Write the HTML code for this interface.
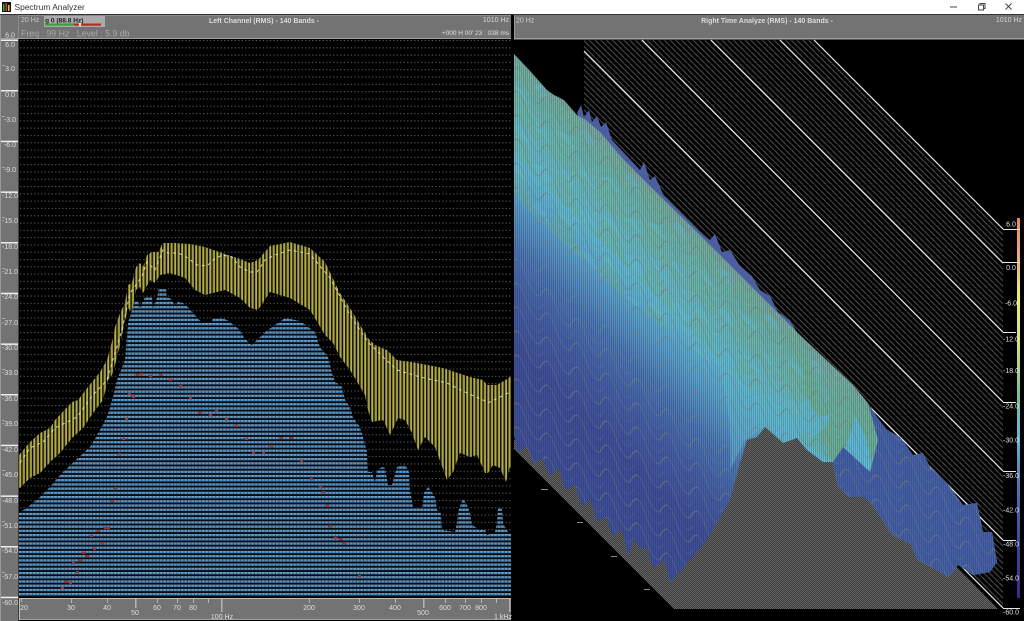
<!DOCTYPE html>
<html><head><meta charset="utf-8"><title>Spectrum Analyzer</title>
<style>
html,body{margin:0;padding:0;background:#000;width:1024px;height:621px;overflow:hidden}
svg{display:block}
text{font-family:"Liberation Sans",sans-serif}
</style></head><body>
<svg xmlns="http://www.w3.org/2000/svg" width="1024" height="621" viewBox="0 0 1024 621">
<defs>
<pattern id="dots" patternUnits="userSpaceOnUse" width="3.52" height="7.3" patternTransform="translate(19 40)"><rect width="3.52" height="7.3" fill="#000"/><rect x="1" y="0" width="1.2" height="1.1" fill="#5c5c5c"/></pattern>
<pattern id="yel" patternUnits="userSpaceOnUse" width="3.52" height="4" patternTransform="translate(19 0)"><rect width="3.52" height="4" fill="#000"/><rect x="0" width=".9" height="4" fill="#85822f"/><rect x=".9" width="1.4" height="4" fill="#bab24a"/></pattern>
<pattern id="blu" patternUnits="userSpaceOnUse" width="3.52" height="4.22" patternTransform="translate(19 597.3)"><rect width="3.52" height="4.22" fill="#03060a"/><rect y="0" width="3.52" height=".8" fill="#8fb8d8"/><rect y=".8" width="3.52" height="1.5" fill="#4f96d0"/><rect x="2.6" width=".9" height="4.22" fill="#123" opacity=".55"/></pattern>
<pattern id="hatch" patternUnits="userSpaceOnUse" width="5.77" height="5.77" patternTransform="translate(1 0)"><path d="M-1 -1L6.77 6.77" stroke="#525252" stroke-width="1" fill="none"/></pattern>
<pattern id="chk" patternUnits="userSpaceOnUse" width="2" height="2"><rect width="2" height="2" fill="#3b3b3b"/><rect width="1" height="1" fill="#6a6a6a"/><rect x="1" y="1" width="1" height="1" fill="#626262"/></pattern>
<pattern id="vs" patternUnits="userSpaceOnUse" width="2" height="4"><rect x="1" width="1" height="4" fill="#0b1530" opacity=".2"/></pattern>
<pattern id="wav" patternUnits="userSpaceOnUse" width="30" height="24" patternTransform="skewY(45)"><path d="M0 20Q7.5 -4 15 12T30 20" fill="none" stroke="#80887f" stroke-width=".9" opacity=".62"/><path d="M0 8Q7.5 -12 15 2T30 8" fill="none" stroke="#80887f" stroke-width=".6" opacity=".4"/></pattern>
<pattern id="wav2" patternUnits="userSpaceOnUse" width="11" height="9" patternTransform="skewY(45)"><path d="M0 8Q3 -1 6 5T11 8" fill="none" stroke="#a0ccd0" stroke-width=".5" opacity=".35"/></pattern>
<pattern id="blob" patternUnits="userSpaceOnUse" width="46" height="40" patternTransform="skewY(45)"><path d="M0 30Q11 -6 23 22T46 30V40H0Z" fill="#6fb596" opacity=".38"/><path d="M4 16Q14 0 24 16Z" fill="#66c6dc" opacity=".45"/><path d="M26 34Q36 16 44 34Z" fill="#66c6dc" opacity=".4"/></pattern>
<linearGradient id="surf" gradientUnits="userSpaceOnUse" x1="700" y1="235" x2="550" y2="385">
<stop offset="0" stop-color="#78a89e"/><stop offset=".1" stop-color="#6ab4a8"/><stop offset=".22" stop-color="#68b8bc"/><stop offset=".36" stop-color="#62bcd2"/><stop offset=".5" stop-color="#5a9fcb"/><stop offset=".65" stop-color="#4c78b4"/><stop offset=".8" stop-color="#4660a6"/><stop offset="1" stop-color="#3f4f98"/>
</linearGradient>
<linearGradient id="scale" x1="0" y1="0" x2="0" y2="1">
<stop offset="0" stop-color="#e8875a"/><stop offset=".12" stop-color="#eeb08a"/><stop offset=".2" stop-color="#f2f060"/><stop offset=".33" stop-color="#d8e070"/><stop offset=".47" stop-color="#70c0a0"/><stop offset=".58" stop-color="#60bcd8"/><stop offset=".7" stop-color="#4c78b8"/><stop offset=".85" stop-color="#3c48a0"/><stop offset="1" stop-color="#3a2a88"/>
</linearGradient>
<clipPath id="hclip"><polygon points="584,40 814,40 1003,229 1003,608 584,189"/></clipPath>
<clipPath id="sclip"><polygon points="514,54 531,72 547,90 554,95 564,100 577,115 586,120 601,133 624,160 632,168 660,196 700,235 730,265 760,295 800,335 853,385 868,403 877,417 887,430 900,437 913,455 923,453 930,467 947,483 963,505 977,503 983,532 992,532 997,562 990,572 973,575 958,565 948,577 937,570 918,560 910,543 892,535 875,508 865,497 850,497 838,487 833,462 823,462 807,450 797,438 783,443 765,427 757,437 747,440 740,463 730,500 707,540 670,583 665,560 653,568 647,548 640,548 634,540 628,556 622,530 612,536 606,516 598,522 590,500 582,506 574,484 566,490 558,468 550,476 542,458 534,464 526,446 518,452 514,436"/></clipPath>
<clipPath id="rclip"><polygon points="514,54 868,403 840,440 760,400 640,310 514,200"/></clipPath>
</defs>

<!-- title bar -->
<rect width="1024" height="14" fill="#fff"/>
<rect y="14" width="1024" height="1" fill="#333"/>
<rect x="2" y="2" width="9" height="10" fill="#111"/>
<rect x="3" y="4" width="1.5" height="7" fill="#3a3"/><rect x="5.5" y="3" width="1.5" height="8" fill="#c33"/><rect x="8" y="5" width="1.5" height="6" fill="#dc3"/>
<text x="14.5" y="10" font-size="8.4" fill="#333">Spectrum Analyzer</text>
<rect x="950" y="6.5" width="7" height="1" fill="#444"/>
<path d="M978.5 5h5v5h-5zM980 5V3.500h5v5h-1.500" fill="none" stroke="#444" stroke-width="1"/>
<path d="M1005.500 3.500l6 6M1011.500 3.500l-6 6" stroke="#444" stroke-width="1" fill="none"/>

<!-- left header -->
<rect y="15" width="511" height="24" fill="#737373"/>
<rect x="19" y="15" width="492" height="1" fill="#8c8c8c"/>
<rect x="18" y="15" width="1" height="24" fill="#8a8a8a"/>
<text x="21" y="22" font-size="7" fill="#c8c8c8">20 Hz</text>
<rect x="44" y="16" width="61" height="11" fill="#ababab"/>
<text x="45" y="22.500" font-size="6.600" font-weight="bold" fill="#222">g  0 (88.8 Hz)</text>
<rect x="45" y="23.500" width="29" height="2.200" fill="#3aa03a"/>
<rect x="74" y="23.500" width="27" height="2.200" fill="#b03020"/>
<rect x="79" y="23" width="2" height="3" fill="#eee"/>
<text x="21" y="36.500" font-size="8.800" fill="#a8a8a8" xml:space="preserve">Freq : 99 Hz   Level : 5.9 db</text>
<text x="264" y="23" font-size="7" font-weight="bold" text-anchor="middle" fill="#dcdcdc">Left Channel (RMS) - 140 Bands -</text>
<text x="509" y="22" font-size="7" text-anchor="end" fill="#d8d8d8">1010 Hz</text>
<text x="509" y="35" font-size="6.500" text-anchor="end" fill="#e0e0e0">+000 H 00' 23 : 038 ms</text>
<rect y="38" width="511" height="1" fill="#a0a0a0"/>

<!-- left scale -->
<rect y="39" width="19" height="582" fill="#737373"/>
<rect x="18" y="39" width="1" height="582" fill="#3c3c3c"/>
<rect x="0" y="15" width="1" height="606" fill="#999"/>
<g fill="#f0f0f0">
<rect x="1" y="39.500" width="17" height="1.500"/><rect x="1" y="90" width="17" height="1.500"/><rect x="1" y="140.700" width="17" height="1.500"/><rect x="1" y="191.400" width="17" height="1.500"/><rect x="1" y="242" width="17" height="1.500"/><rect x="1" y="292.700" width="17" height="1.500"/><rect x="1" y="343.400" width="17" height="1.500"/><rect x="1" y="394" width="17" height="1.500"/><rect x="1" y="444.700" width="17" height="1.500"/><rect x="1" y="495.400" width="17" height="1.500"/><rect x="1" y="546" width="17" height="1.500"/><rect x="1" y="596.700" width="17" height="1.500"/>
</g>
<g fill="#aaa">
<rect x="2" y="65" width="3" height="1"/><rect x="2" y="116" width="3" height="1"/><rect x="2" y="167" width="3" height="1"/><rect x="2" y="217" width="3" height="1"/><rect x="2" y="268" width="3" height="1"/><rect x="2" y="318" width="3" height="1"/><rect x="2" y="369" width="3" height="1"/><rect x="2" y="420" width="3" height="1"/><rect x="2" y="470" width="3" height="1"/><rect x="2" y="521" width="3" height="1"/><rect x="2" y="572" width="3" height="1"/>
</g>
<g font-size="7" fill="#dedede" text-anchor="middle">
<text x="10" y="37.500">6.0</text>
<text x="10" y="47">6.0</text><text x="10" y="71">3.0</text><text x="10" y="97">0.0</text><text x="10" y="122">-3.0</text><text x="10" y="147">-6.0</text><text x="10" y="172">-9.0</text><text x="10" y="198">-12.0</text><text x="10" y="223">-15.0</text><text x="10" y="249">-18.0</text><text x="10" y="274">-21.0</text><text x="10" y="299">-24.0</text><text x="10" y="325">-27.0</text><text x="10" y="350">-30.0</text><text x="10" y="375">-33.0</text><text x="10" y="401">-36.0</text><text x="10" y="426">-39.0</text><text x="10" y="452">-42.0</text><text x="10" y="477">-45.0</text><text x="10" y="503">-48.0</text><text x="10" y="528">-51.0</text><text x="10" y="553">-54.0</text><text x="10" y="579">-57.0</text><text x="10" y="605">-60.0</text>
</g>

<!-- left plot -->
<rect x="19" y="39" width="493" height="559" fill="url(#dots)"/>
<polygon fill="url(#blu)" points="19,513 28,507 40,497 50,487 60,475 78,458 90,447 100,430 107,417 113,397 117,380 121,370 125,360 128,323 135,300 138,300 140,308 145,297 152,297 153,308 157,298 159,288 166,288 167,298 170,298 175,305 178,302 183,303 188,307 195,315 202,323 212,322 213,317 218,317 227,320 240,330 244,338 252,345 265,332 285,318 300,321 315,332 320,347 328,357 332,373 335,382 342,387 345,400 350,407 353,418 360,427 363,437 367,452 368,472 372,472 375,482 377,470 382,467 385,468 388,485 392,485 397,467 405,464 409,472 410,490 413,507 422,508 424,493 428,487 435,497 437,510 441,513 442,530 455,532 457,523 458,512 463,498 467,505 470,513 472,525 480,530 485,530 487,535 495,532 497,522 498,508 502,508 503,523 508,532 512,533 512,597 19,597"/>
<polygon fill="url(#yel)" points="19,455 30,442 40,433 50,428 55,420 72,402 78,400 88,387 100,372 107,360 113,338 115,327 120,313 125,303 128,285 132,283 136,267 140,263 143,267 147,255 152,252 158,252 163,243 175,243 190,244 205,247 225,254 240,259 250,263 258,260 270,246 290,242 310,248 325,262 340,293 350,308 368,338 375,345 387,350 397,360 417,363 443,368 470,377 483,380 487,385 497,385 502,382 510,377 512,376 512,470 510,467 506,482 500,468 493,465 488,473 485,473 477,455 470,457 460,453 453,472 447,480 439,458 435,447 425,437 418,450 412,433 405,420 398,418 390,435 387,428 383,420 372,422 368,410 365,395 350,370 340,357 333,343 325,335 310,310 290,298 270,292 258,310 250,308 240,298 225,290 205,295 195,290 185,278 170,273 160,275 155,283 150,280 143,293 140,287 136,290 132,312 128,308 124,325 120,345 115,365 112,375 108,380 103,400 93,413 83,428 72,438 60,453 50,462 40,473 30,478 20,488 19,488"/>
<path d="M20 463L30 448 43 442 55 428 77 417 93 395 107 380 112 363 122 330 130 293 136 285 142 276 147 262 155 270 163 250 168 253 178 253 185 256 197 265 207 266 213 260 222 255 232 257 240 267 250 272 257 272 265 260 275 255 290 250 310 254 330 278 350 315 368 342 383 357 397 370 420 377 447 383 467 393 483 400 488 403 500 397 510 392" fill="none" stroke="#e6e6d8" stroke-width="1" stroke-dasharray="3 3.500" opacity=".85"/>
<g fill="#c83a34" stroke="#5a1a18" stroke-width=".4">
<rect x="61" y="587" width="3" height="2"/><rect x="65" y="581" width="3" height="2"/><rect x="69" y="582" width="3" height="2"/><rect x="76" y="571" width="3" height="2"/><rect x="72" y="562" width="3" height="2"/><rect x="79" y="559" width="3" height="2"/><rect x="82" y="552" width="3" height="2"/><rect x="86" y="555" width="3" height="2"/><rect x="93" y="548" width="3" height="2"/><rect x="101" y="542" width="3" height="2"/><rect x="90" y="535" width="3" height="2"/><rect x="97" y="530" width="3" height="2"/><rect x="104" y="527" width="3" height="2"/><rect x="107" y="527" width="3" height="2"/><rect x="111" y="500" width="3" height="2"/><rect x="114" y="487" width="3" height="2"/><rect x="118" y="453" width="3" height="2"/><rect x="122" y="438" width="3" height="2"/><rect x="125" y="418" width="3" height="2"/><rect x="128" y="393" width="3" height="2"/><rect x="132" y="396" width="3" height="2"/><rect x="136" y="374" width="3" height="2"/><rect x="140" y="373" width="3" height="2"/><rect x="149" y="375" width="3" height="2"/><rect x="159" y="374" width="3" height="2"/><rect x="169" y="379" width="3" height="2"/><rect x="179" y="385" width="3" height="2"/><rect x="189" y="397" width="3" height="2"/><rect x="199" y="412" width="3" height="2"/><rect x="209" y="414" width="3" height="2"/><rect x="215" y="410" width="3" height="2"/><rect x="225" y="418" width="3" height="2"/><rect x="235" y="425" width="3" height="2"/><rect x="245" y="438" width="3" height="2"/><rect x="252" y="452" width="3" height="2"/><rect x="262" y="452" width="3" height="2"/><rect x="270" y="445" width="3" height="2"/><rect x="280" y="437" width="3" height="2"/><rect x="290" y="437" width="3" height="2"/><rect x="300" y="460" width="3" height="2"/><rect x="310" y="478" width="3" height="2"/><rect x="319" y="486" width="3" height="2"/><rect x="322" y="491" width="3" height="2"/><rect x="326" y="505" width="3" height="2"/><rect x="329" y="525" width="3" height="2"/><rect x="334" y="537" width="3" height="2"/><rect x="339" y="538" width="3" height="2"/><rect x="343" y="542" width="3" height="2"/><rect x="358" y="575" width="3" height="2"/>
</g>
<rect x="511" y="15" width="3" height="606" fill="#000"/>

<!-- bottom axis -->
<rect x="19" y="598" width="492" height="22" fill="#737373"/>
<rect x="19" y="598" width="492" height="1" fill="#bdbdbd"/>
<rect x="19" y="619" width="492" height="1" fill="#a0a0a0"/>
<rect x="19" y="598" width="1" height="22" fill="#bdbdbd"/>
<g fill="#b5b5b5">
<rect x="21" y="599" width="1" height="3"/><rect x="71" y="599" width="1" height="4"/><rect x="107" y="599" width="1" height="4"/><rect x="135" y="599" width="1.500" height="9"/><rect x="157" y="599" width="1" height="4"/><rect x="177" y="599" width="1" height="4"/><rect x="193" y="599" width="1" height="4"/><rect x="208" y="599" width="1" height="4"/><rect x="221" y="599" width="1.500" height="13"/><rect x="309" y="599" width="1" height="4"/><rect x="359" y="599" width="1" height="4"/><rect x="395" y="599" width="1" height="4"/><rect x="423" y="599" width="1.500" height="9"/><rect x="445" y="599" width="1" height="4"/><rect x="465" y="599" width="1" height="4"/><rect x="481" y="599" width="1" height="4"/><rect x="496" y="599" width="1" height="4"/><rect x="509" y="599" width="1.500" height="13"/>
</g>
<g font-size="7" fill="#dedede" text-anchor="middle">
<text x="24" y="610">20</text><text x="71" y="610">30</text><text x="107" y="610">40</text><text x="135" y="615">50</text><text x="157" y="610">60</text><text x="177" y="610">70</text><text x="193" y="610">80</text><text x="222" y="619">100 Hz</text><text x="309" y="610">200</text><text x="359" y="610">300</text><text x="395" y="610">400</text><text x="423" y="615">500</text><text x="445" y="610">600</text><text x="465" y="610">700</text><text x="481" y="610">800</text><text x="503" y="619">1 kHz</text>
</g>

<!-- right header -->
<rect x="514" y="15" width="510" height="24" fill="#737373"/>
<rect x="514" y="15" width="1" height="24" fill="#9a9a9a"/>
<rect x="514" y="38" width="510" height="1.500" fill="#a0a0a0"/>
<text x="516" y="22.500" font-size="7" fill="#d0d0d0">20 Hz</text>
<text x="767" y="23" font-size="7" font-weight="bold" text-anchor="middle" fill="#dcdcdc">Right Time Analyze (RMS) - 140 Bands -</text>
<text x="1022" y="22" font-size="7" text-anchor="end" fill="#d8d8d8">1010 Hz</text>

<!-- right plot -->
<rect x="514" y="40" width="510" height="581" fill="#000"/>
<g clip-path="url(#hclip)">
<rect x="584" y="40" width="420" height="570" fill="url(#hatch)"/>
</g>
<g stroke="#ededed" stroke-width="1.200" fill="none">
<path d="M584 51L1003 471"/><path d="M642 40L1003 402"/><path d="M711 40L1003 332"/><path d="M780 40L1003 263"/><path d="M814 40L1003 229"/><path d="M857 394L1003 540"/><path d="M958 563L1003 608"/>
</g>

<!-- base -->
<polygon fill="url(#chk)" points="514,440 514,449 674,609 998,609 950,560 850,460 700,400"/>
<g fill="#8a8a8a">
<rect x="541" y="489" width="7" height="1"/><rect x="577" y="522" width="6" height="1"/><rect x="611" y="556" width="6" height="1"/><rect x="644" y="589" width="6" height="1"/>
</g>

<!-- spikes behind the top edge -->
<polygon fill="#4a5ea0" points="577,113 581,105 584,117 589,110 592,122 597,116 601,127 606,122 612,140 640,170 644,162 650,180 655,176 664,196 700,232 710,240 715,234 722,252 730,250 740,266 752,276 760,290 770,296 778,312 790,320 800,338 812,346 822,360 835,370 850,386 860,396 840,420 700,300 600,160"/>

<!-- surface -->
<g clip-path="url(#sclip)">
<rect x="514" y="40" width="490" height="560" fill="url(#surf)"/>
<g clip-path="url(#rclip)"><rect x="514" y="40" width="400" height="420" fill="url(#blob)"/></g>
<!-- green / cyan humps -->
<path d="M800 345Q820 380 822 410Q835 385 852 392L868 410 876 440 870 470 835 462 800 440Q810 400 800 345Z" fill="#6cb298"/>
<path d="M806 395Q818 425 832 412Q824 438 806 436 794 420 806 395Z" fill="#62bcd2" opacity=".85"/>
<path d="M855 415Q870 440 872 470L835 462Q850 445 855 415Z" fill="#62bcd8"/>
<path d="M700 320Q745 385 775 395T830 455L785 442 765 426 745 440 730 470Q735 390 700 320Z" fill="#62bcd2" opacity=".55"/>
<!-- tail -->
<polygon fill="#4660a8" points="868,403 877,417 887,430 900,437 913,455 923,453 930,467 947,483 963,505 977,503 983,532 992,532 997,562 990,572 973,575 958,565 948,577 937,570 918,560 910,543 892,535 875,508 865,497 850,497 838,487 833,462 843,447 857,460 870,472 878,440"/>
<g clip-path="url(#rclip)"><rect x="514" y="40" width="400" height="420" fill="url(#wav2)"/></g>
<rect x="514" y="40" width="490" height="560" fill="url(#wav)"/>
<rect x="514" y="40" width="490" height="560" fill="url(#vs)"/>
</g>

<!-- right colour scale -->
<rect x="1017" y="218" width="3" height="380" fill="url(#scale)"/>
<g fill="#e8e8e8">
<rect x="1003" y="229" width="17" height="1"/><rect x="1003" y="262" width="17" height="1"/><rect x="1003" y="332" width="13" height="1"/><rect x="1003" y="402" width="13" height="1"/><rect x="1003" y="471" width="13" height="1"/><rect x="1003" y="540" width="13" height="1"/><rect x="1003" y="608" width="17" height="1"/>
</g>
<g font-size="7" fill="#e0e0e0" text-anchor="middle">
<text x="1011" y="226.500">6.0</text><text x="1011" y="270">0.0</text><text x="1011" y="305.500">-6.0</text><text x="1011" y="341.500">-12.0</text><text x="1011" y="373">-18.0</text><text x="1011" y="408.500">-24.0</text><text x="1011" y="442.500">-30.0</text><text x="1011" y="478">-36.0</text><text x="1011" y="512.500">-42.0</text><text x="1011" y="546.500">-48.0</text><text x="1011" y="580.500">-54.0</text><text x="1011" y="614.500">-60.0</text>
</g>
</svg>
</body></html>
